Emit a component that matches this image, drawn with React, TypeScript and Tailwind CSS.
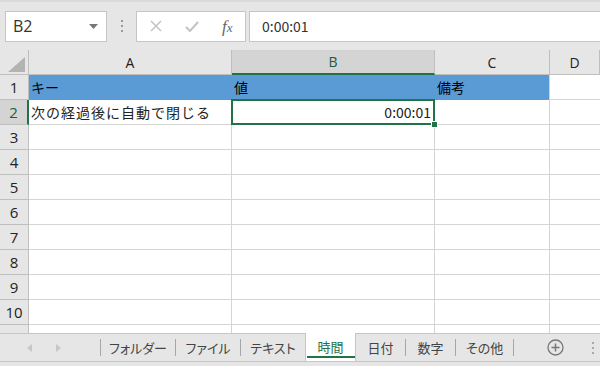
import React from "react";

const jp = { fontFamily: '"Noto Sans CJK JP", "Noto Sans", sans-serif' };
const ui = { fontFamily: '"Open Sans", "Noto Sans CJK JP", sans-serif' };

const cols = ["A", "B", "C", "D"];
const gridCols = "grid grid-cols-[29px_203px_203px_115px_1fr]";

function Corner() {
  return (
    <div className="relative h-full border-r border-b border-[#bfbfbf] bg-[#e6e6e6]">
      <svg className="absolute left-[8px] top-[7px]" width="17" height="15" viewBox="0 0 17 15">
        <polygon points="17,0 17,15 0,15" fill="#b3b3b3" />
      </svg>
    </div>
  );
}

function Row({ n }: { n: number }) {
  const sel = n === 2;
  return (
    <div className={`${gridCols} h-[25px]`}>
      <div
        className={`flex items-center justify-center border-b border-[#bfbfbf] text-[15px] ${
          sel ? "bg-[#d4d4d4] border-r-2 border-r-[#217346] text-[#1d5a3f]" : "bg-[#e6e6e6] border-r border-r-[#bfbfbf] text-[#222]"
        }`}
        style={ui}
      >
        {n}
      </div>
      {n === 1 ? (
        <>
          <div className="bg-[#5b9bd5] pl-[2px] flex items-center text-[14px] text-black" style={jp}>キー</div>
          <div className="bg-[#5b9bd5] pl-[2px] flex items-center text-[14px] text-black" style={jp}>値</div>
          <div className="bg-[#5b9bd5] pl-[2px] flex items-center text-[14px] text-black border-r border-[#d4d4d4]" style={jp}>備考</div>
          <div className="border-b border-[#d4d4d4]" />
        </>
      ) : n === 2 ? (
        <>
          <div className="border-r border-b border-[#d4d4d4] pl-[2px] flex items-center text-[14px] text-[#222] tracking-[1px] whitespace-nowrap" style={jp}>
            次の経過後に自動で閉じる
          </div>
          <div className="relative border-r border-b border-[#d4d4d4] pr-[3px] flex items-center justify-end text-[14px] text-[#222]" style={jp}>
            0:00:01
            <div className="absolute -left-[1px] -top-[1px] -right-[1px] -bottom-[1px] border-2 border-[#217346]" />
            <div className="absolute -right-[3px] -bottom-[3px] w-[5px] h-[5px] bg-[#217346] outline outline-1 outline-white" />
          </div>
          <div className="border-r border-b border-[#d4d4d4]" />
          <div className="border-b border-[#d4d4d4]" />
        </>
      ) : (
        <>
          <div className="border-r border-b border-[#d4d4d4]" />
          <div className="border-r border-b border-[#d4d4d4]" />
          <div className="border-r border-b border-[#d4d4d4]" />
          <div className="border-b border-[#d4d4d4]" />
        </>
      )}
    </div>
  );
}

function Tab({ label, w, active }: { label: string; w: string; active?: boolean }) {
  if (active) {
    return (
      <div className={`relative shrink-0 ${w} -mt-[1px] h-[28px] bg-white border-x border-[#c6c6c6] flex items-center justify-center text-[13px] text-[#217346] whitespace-nowrap [font-feature-settings:'palt']`} style={jp}>
        {label}
        <div className="absolute left-[1px] right-[0px] bottom-[3px] h-[2px] bg-[#217346]" />
      </div>
    );
  }
  return (
    <div className={`shrink-0 ${w} flex items-center`}>
      <div className="flex-1 text-center text-[13px] text-[#444] whitespace-nowrap [font-feature-settings:'palt']" style={jp}>{label}</div>
      <div className="w-px h-[17px] bg-[#a6a6a6]" />
    </div>
  );
}

export default function App() {
  return (
    <div className="w-[600px] h-[366px] overflow-hidden bg-white select-none">
      {/* toolbar */}
      <div className="h-[50px] bg-[#e6e6e6] flex items-center border-t-[2px] border-[#dadada]">
        <div className="ml-[5px] w-[102px] h-[31px] bg-white border border-[#c6c6c6] flex items-center justify-between pl-[7px] pr-[8px]">
          <span className="text-[16px] text-[#333]" style={ui}>B2</span>
          <svg width="9" height="5" viewBox="0 0 9 5"><polygon points="0,0 9,0 4.5,5" fill="#777" /></svg>
        </div>
        <div className="ml-[14px] flex flex-col gap-[3px]">
          <div className="w-[2px] h-[2px] bg-[#999]" />
          <div className="w-[2px] h-[2px] bg-[#999]" />
          <div className="w-[2px] h-[2px] bg-[#999]" />
        </div>
        <div className="ml-[13px] w-[110px] h-[31px] bg-white border border-[#c6c6c6] flex items-center">
          <svg className="ml-[13px]" width="12" height="12" viewBox="0 0 12 12">
            <path d="M1 1 L11 11 M11 1 L1 11" stroke="#c3c3c3" strokeWidth="1.5" />
          </svg>
          <svg className="ml-[23px]" width="14" height="11" viewBox="0 0 14 11">
            <path d="M1 6 L5 10 L13 1" stroke="#c3c3c3" strokeWidth="2" fill="none" />
          </svg>
          <span className="ml-[23px] text-[17px] leading-none italic text-[#666]" style={{ fontFamily: '"Liberation Serif", serif' }}>
            f<span className="text-[13px]">x</span>
          </span>
        </div>
        <div className="ml-[3px] flex-1 h-[31px] bg-white border-y border-l border-[#c6c6c6] flex items-center pl-[12px] text-[14px] text-[#333]" style={jp}>
          0:00:01
        </div>
      </div>

      {/* column headers */}
      <div className={`${gridCols} h-[25px] bg-[#e6e6e6]`}>
        <Corner />
        {cols.map((c) => (
          <div
            key={c}
            className={`flex items-center justify-center text-[14px] ${
              c === "B"
                ? "bg-[#d4d4d4] border-r border-r-[#bfbfbf] border-b-2 border-b-[#217346] text-[#1d5a3f]"
                : "border-r border-b border-[#bfbfbf] text-[#222]"
            }`}
            style={ui}
          >
            {c}
          </div>
        ))}
      </div>

      {Array.from({ length: 10 }, (_, i) => (
        <Row key={i} n={i + 1} />
      ))}

      {/* partial row 11 */}
      <div className={`${gridCols} h-[8px] overflow-hidden`}>
        <div className="bg-[#e6e6e6] border-r border-[#bfbfbf] relative overflow-hidden">
          <div className="absolute left-0 right-0 top-[3px] text-center text-[15px] leading-[20px] text-[#222]" style={ui}>11</div>
        </div>
        <div className="border-r border-[#d4d4d4]" />
        <div className="border-r border-[#d4d4d4]" />
        <div className="border-r border-[#d4d4d4]" />
        <div />
      </div>

      {/* tab bar */}
      <div className="h-[28px] bg-[#e6e6e6] border-t border-[#c6c6c6] flex items-center">
        <svg className="ml-[27px] shrink-0" width="5" height="8" viewBox="0 0 5 8"><polygon points="5,0 5,8 0,4" fill="#c6c6c6" /></svg>
        <svg className="ml-[24px] shrink-0" width="5" height="8" viewBox="0 0 5 8"><polygon points="0,0 0,8 5,4" fill="#c6c6c6" /></svg>
        <div className="ml-[39px] shrink-0 w-px h-[17px] bg-[#a6a6a6]" />
        <Tab label="フォルダー" w="w-[75px]" />
        <Tab label="ファイル" w="w-[65px]" />
        <div className="shrink-0 w-[64px] text-center text-[13px] text-[#444] whitespace-nowrap [font-feature-settings:'palt']" style={jp}>テキスト</div>
        <Tab label="時間" w="w-[51px]" active />
        <Tab label="日付" w="w-[50px]" />
        <Tab label="数字" w="w-[50px]" />
        <Tab label="その他" w="w-[58px]" />
        <svg className="ml-[33px] shrink-0" width="17" height="17" viewBox="0 0 17 17">
          <circle cx="8.5" cy="8.5" r="7.5" stroke="#777" strokeWidth="1.3" fill="none" />
          <path d="M8.5 4.5 V12.5 M4.5 8.5 H12.5" stroke="#777" strokeWidth="1.5" />
        </svg>
        <div className="ml-[28px] shrink-0 flex flex-col gap-[3px]">
          <div className="w-[2px] h-[2px] bg-[#aaa]" />
          <div className="w-[2px] h-[2px] bg-[#aaa]" />
          <div className="w-[2px] h-[2px] bg-[#aaa]" />
        </div>
      </div>
      <div className="h-[5px] bg-[#e6e6e6] border-t border-[#c6c6c6]" />
    </div>
  );
}
